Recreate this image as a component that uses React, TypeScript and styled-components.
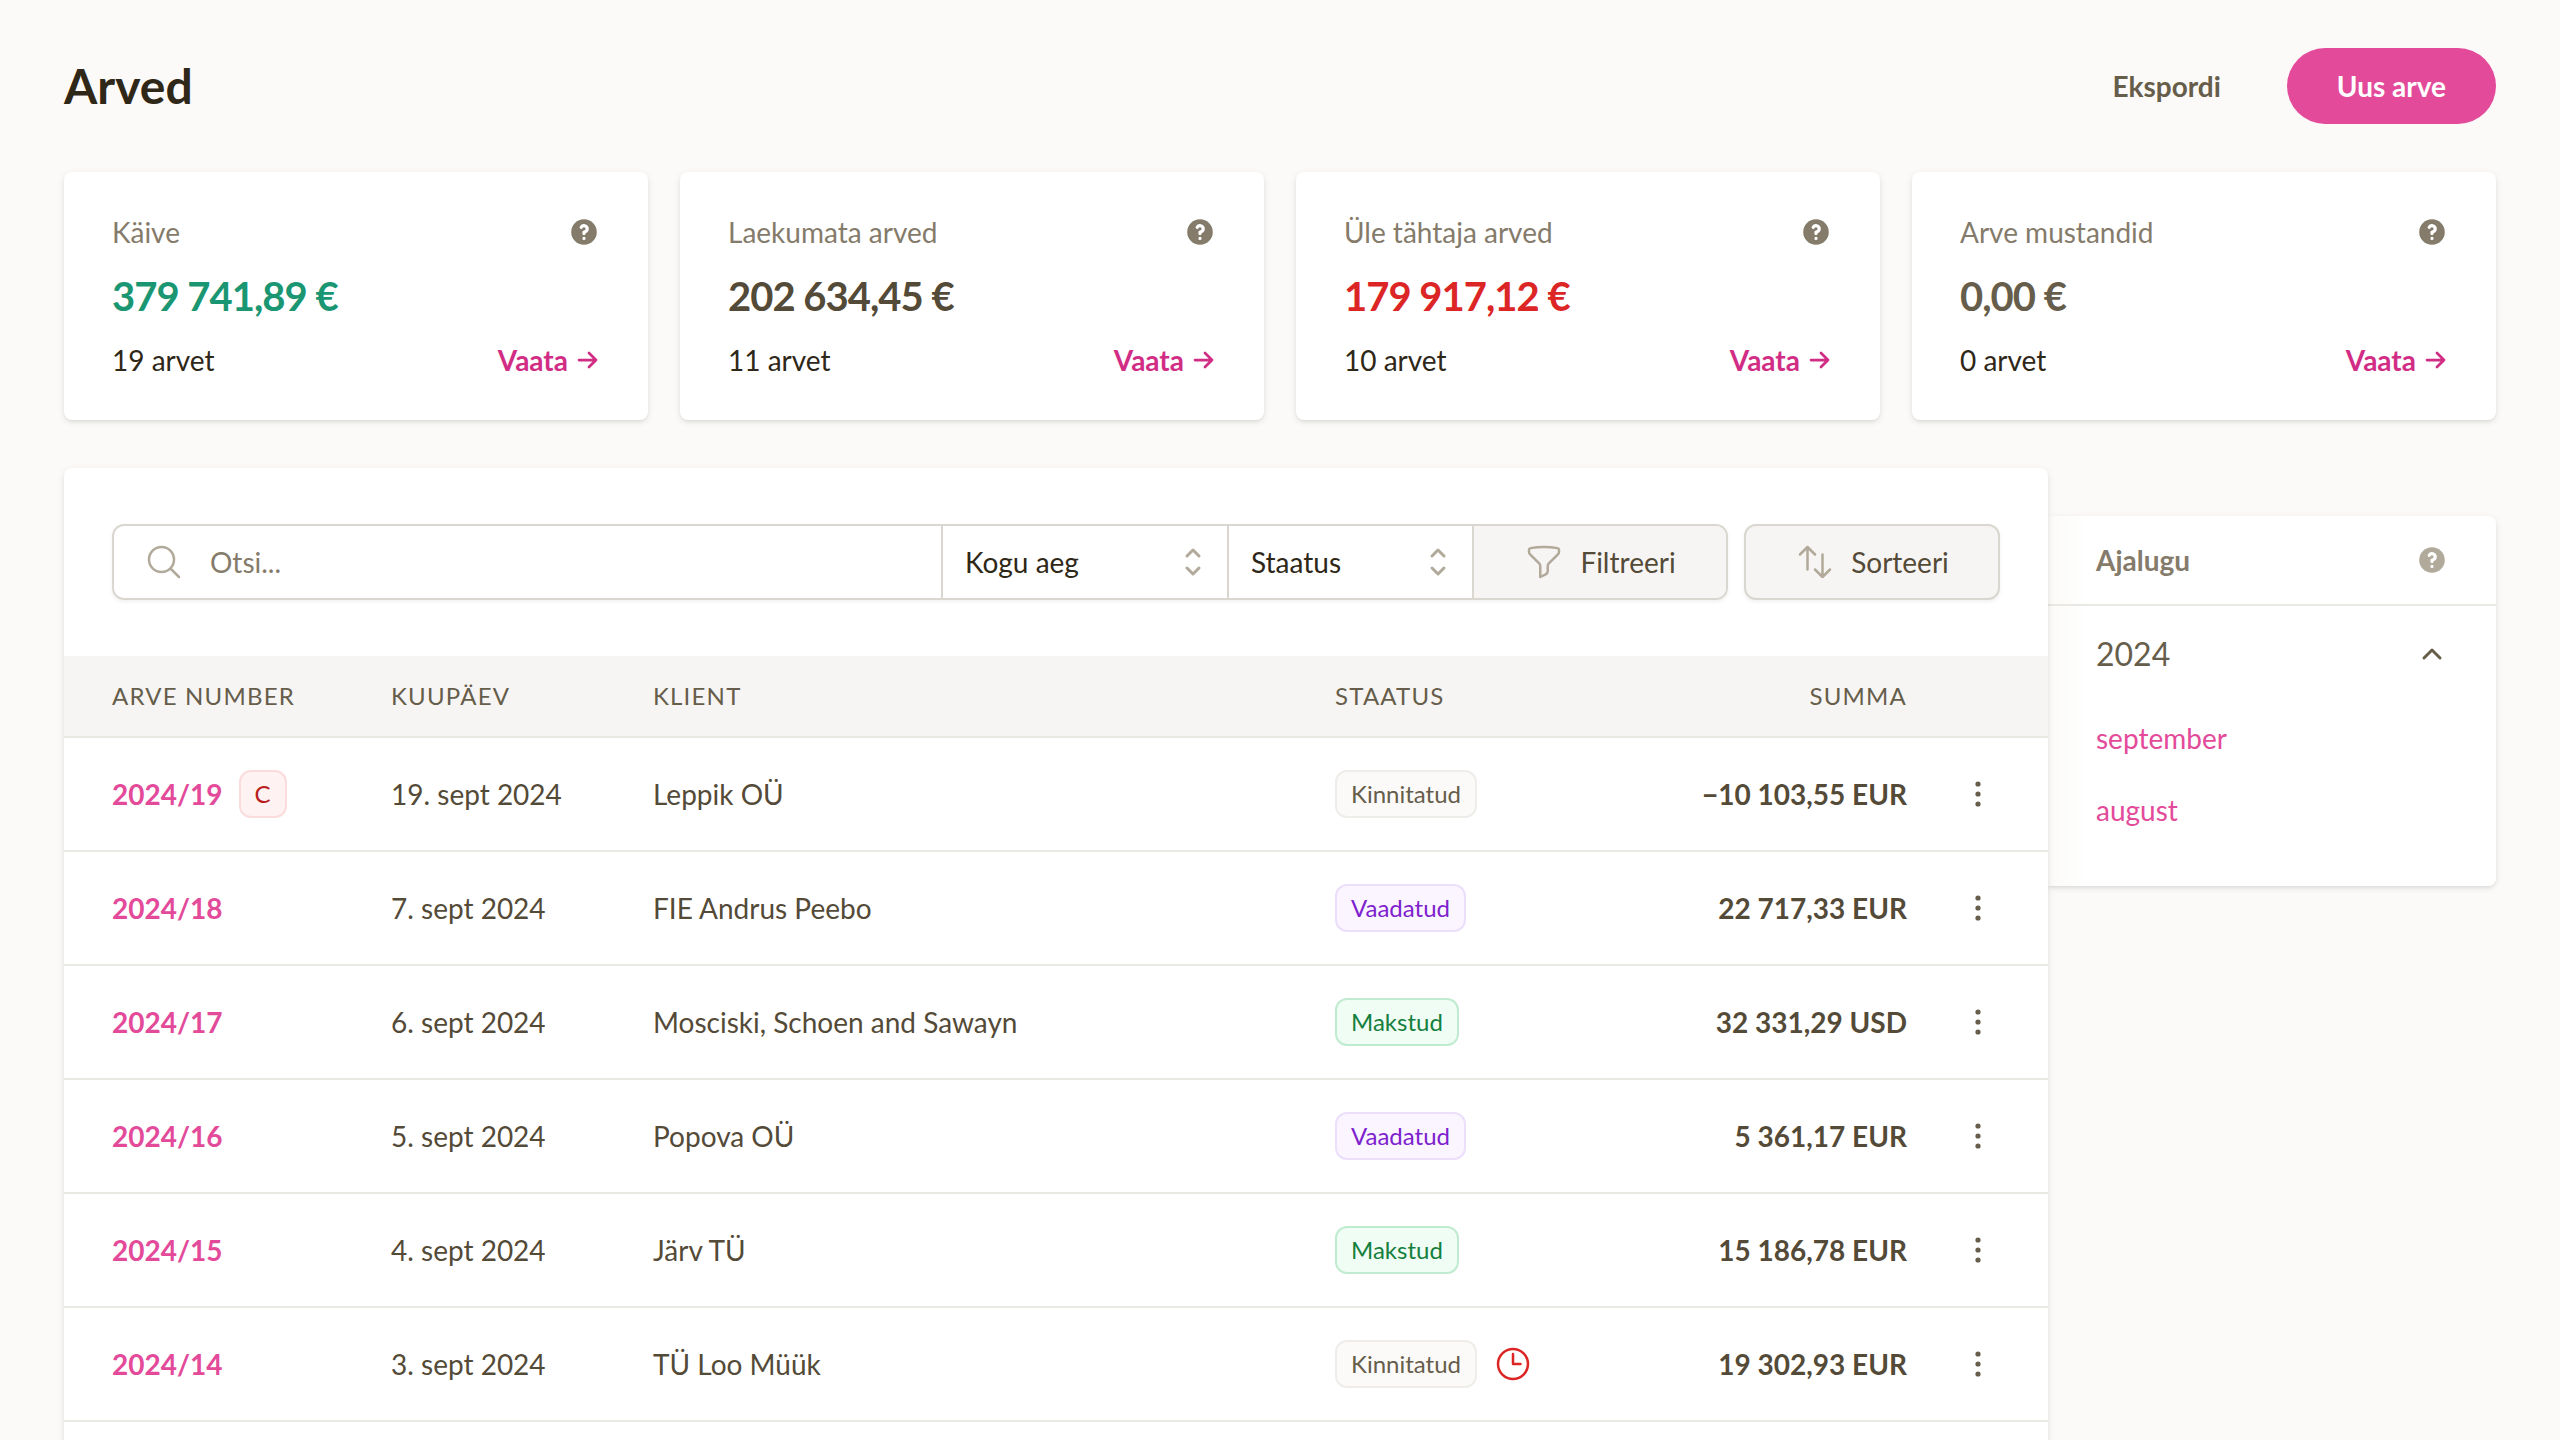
import React from "react";
import styled, { createGlobalStyle, css } from "styled-components";

const Global = createGlobalStyle`
  *, *::before, *::after { box-sizing: border-box; }
  body {
    margin: 0;
    background: #fbfaf8;
    color: #2f2717;
    font-family: Lato, "Open Sans", sans-serif;
    font-size: 28px;
    line-height: 40px;
    text-rendering: optimizeLegibility;
    -webkit-font-smoothing: antialiased;
  }
  button, input, select { font: inherit; color: inherit; margin: 0; text-rendering: inherit; }
  button { cursor: pointer; }
  a { text-decoration: none; }
`;

const Page = styled.div`
  padding: 48px 64px 0;
  height: 100vh;
  overflow: hidden;
`;

const Header = styled.header`
  display: flex;
  align-items: center;
  justify-content: space-between;
  margin-bottom: 48px;
`;

const Title = styled.h1`
  margin: 0;
  font-size: 48px;
  line-height: 64px;
  font-weight: 700;
  color: #2f2717;
`;

const Actions = styled.div`
  display: flex;
  gap: 16px;
`;

const Button = styled.button<{ $primary?: boolean }>`
  height: 76px;
  padding: 0 50px;
  border: 0;
  border-radius: 38px;
  font-weight: 700;
  background: ${(p) => (p.$primary ? "#e34a9a" : "transparent")};
  color: ${(p) => (p.$primary ? "#ffffff" : "#665d4b")};
`;

const cardShadow = css`
  box-shadow: 0 2px 6px rgba(0, 0, 0, 0.1), 0 2px 4px -2px rgba(0, 0, 0, 0.1);
`;

const Stats = styled.section`
  display: grid;
  grid-template-columns: repeat(4, 1fr);
  gap: 32px;
  margin-bottom: 48px;
`;

const StatCard = styled.article`
  display: flex;
  flex-direction: column;
  gap: 24px;
  padding: 40px 48px;
  background: #ffffff;
  border-radius: 8px;
  ${cardShadow}
`;

const StatRow = styled.div`
  display: flex;
  align-items: center;
  justify-content: space-between;
`;

const StatLabel = styled.span`
  color: #857b6b;
`;

const HelpButton = styled.button`
  display: flex;
  padding: 0;
  border: 0;
  background: none;
`;

const Amount = styled.strong<{ $color: string }>`
  font-size: 40px;
  line-height: 40px;
  font-weight: 700;
  letter-spacing: -0.025em;
  color: ${(p) => p.$color};
`;

const MoreLink = styled.a`
  display: flex;
  align-items: center;
  gap: 8px;
  font-weight: 700;
  color: #d12d85;
`;

const Main = styled.main`
  display: grid;
  grid-template-columns: minmax(0, 1fr) 448px;
  align-items: start;
`;

const Panel = styled.section`
  position: relative;
  padding-bottom: 48px;
  background: #ffffff;
  border-radius: 8px;
  ${cardShadow}
`;

const Toolbar = styled.div`
  display: flex;
  gap: 16px;
  padding: 56px 48px;
`;

const FilterGroup = styled.div`
  display: flex;
  flex: 1;
  height: 76px;
  border: 2px solid #dad7d0;
  border-radius: 12px;
  box-shadow: 0 2px 4px rgba(0, 0, 0, 0.06);
  overflow: hidden;
`;

const Search = styled.label`
  display: flex;
  align-items: center;
  flex: 1;
  gap: 26px;
  padding-left: 30px;
`;

const SearchInput = styled.input`
  flex: 1;
  min-width: 0;
  height: 72px;
  padding: 0;
  border: 0;
  outline: 0;
  background: transparent;
  &::placeholder { color: #857b6b; opacity: 1; }
`;

const SelectBox = styled.div<{ $width: number }>`
  display: grid;
  align-items: center;
  width: ${(p) => p.$width}px;
  border-left: 2px solid #dad7d0;
  & > * { grid-area: 1 / 1; }
  & > svg { justify-self: end; margin-right: 14px; pointer-events: none; }
`;

const Select = styled.select`
  width: 100%;
  height: 72px;
  padding: 0 56px 0 22px;
  border: 0;
  outline: 0;
  background: transparent;
  appearance: none;
`;

const ToolButton = styled.button<{ $attached?: boolean }>`
  display: flex;
  align-items: center;
  justify-content: center;
  gap: 16px;
  width: 256px;
  height: 76px;
  padding: 0;
  border: 2px solid #dad7d0;
  border-radius: 12px;
  background: #f7f5f3;
  color: #544a38;
  box-shadow: 0 2px 4px rgba(0, 0, 0, 0.06);
  ${(p) =>
    p.$attached &&
    css`
      width: 254px;
      height: 72px;
      border-width: 0 0 0 2px;
      border-radius: 0;
      box-shadow: none;
    `}
`;

const Table = styled.table`
  width: 100%;
  border-collapse: separate;
  border-spacing: 0;
  table-layout: fixed;
`;

const Col = styled.col<{ $width?: number }>`
  width: ${(p) => (p.$width ? `${p.$width}px` : "auto")};
`;

const Th = styled.th<{ $end?: boolean }>`
  height: 82px;
  padding: 0;
  border-bottom: 2px solid #eae8e3;
  background: #f7f5f3;
  color: #665d4b;
  font-size: 24px;
  line-height: 32px;
  font-weight: 400;
  letter-spacing: 0.05em;
  text-transform: uppercase;
  text-align: ${(p) => (p.$end ? "right" : "left")};
  &:first-child { padding-left: 48px; }
`;

const Td = styled.td<{ $end?: boolean }>`
  height: 114px;
  padding: 0;
  border-bottom: 2px solid #eae8e3;
  color: #544a38;
  font-weight: ${(p) => (p.$end ? 700 : 400)};
  text-align: ${(p) => (p.$end ? "right" : "left")};
  white-space: nowrap;
  &:first-child { padding-left: 48px; }
`;

const CellLine = styled.div`
  display: flex;
  align-items: center;
  gap: 16px;
`;

const InvoiceLink = styled.a`
  font-weight: 700;
  color: #e34a9a;
`;

const tones = {
  grey: ["#fbfaf8", "#efedea", "#665d4b"],
  purple: ["#faf5ff", "#ecdffb", "#7e22ce"],
  green: ["#f0fdf4", "#c1ebd0", "#15803d"],
  red: ["#fef2f2", "#fbdcdc", "#b91c1c"],
};
type Tone = keyof typeof tones;

const Badge = styled.span<{ $tone: Tone }>`
  padding: 6px 14px;
  border: 2px solid ${(p) => tones[p.$tone][1]};
  border-radius: 12px;
  background: ${(p) => tones[p.$tone][0]};
  color: ${(p) => tones[p.$tone][2]};
  font-size: 24px;
  line-height: 32px;
`;

const MenuButton = styled.button`
  display: flex;
  margin: 0 auto;
  padding: 0;
  border: 0;
  background: none;
  color: #665d4b;
`;

const History = styled.aside`
  margin-top: 48px;
  border-radius: 0 8px 8px 0;
  background: linear-gradient(to right, #fbfaf8, #ffffff 40px);
  ${cardShadow}
`;

const HistoryHead = styled.div`
  display: flex;
  align-items: center;
  justify-content: space-between;
  height: 90px;
  padding: 0 48px;
  border-bottom: 2px solid #eae8e3;
`;

const HistoryTitle = styled.h2`
  margin: 0;
  font-size: 28px;
  line-height: 40px;
  font-weight: 700;
  color: #857b6b;
`;

const HistoryBody = styled.div`
  padding: 24px 48px 40px;
`;

const YearButton = styled.button`
  display: flex;
  align-items: center;
  justify-content: space-between;
  width: 100%;
  padding: 0;
  border: 0;
  background: none;
  color: #665d4b;
  font-size: 32px;
  line-height: 48px;
`;

const Months = styled.ul`
  display: grid;
  margin: 0;
  padding: 24px 0 0;
  list-style: none;
`;

const MonthLink = styled.a`
  display: block;
  padding: 16px 0;
  color: #e34a9a;
`;

const HelpIcon = ({ color = "#857b6b" }: { color?: string }) => (
  <svg width="32" height="32" viewBox="0 0 20 20" fill={color} aria-hidden="true">
    <path
      fillRule="evenodd"
      clipRule="evenodd"
      d="M18 10a8 8 0 11-16 0 8 8 0 0116 0zm-8-3a1 1 0 00-.867.5 1 1 0 11-1.731-1A3 3 0 0113 8a3.001 3.001 0 01-2 2.83V11a1 1 0 11-2 0v-1a1 1 0 011-1 1 1 0 100-2zm0 8a1 1 0 100-2 1 1 0 000 2z"
    />
  </svg>
);

type LineIconProps = { d: string; size: number; box?: number; width?: number; color?: string };

const LineIcon = ({ d, size, box = 24, width = 1.5, color = "#b1a999" }: LineIconProps) => (
  <svg width={size} height={size} viewBox={`0 0 ${box} ${box}`} fill="none" stroke={color} strokeWidth={width} strokeLinecap="round" strokeLinejoin="round" aria-hidden="true">
    <path d={d} />
  </svg>
);

const SEARCH = "M21 21l-5.197-5.197m0 0A7.5 7.5 0 105.196 5.196a7.5 7.5 0 0010.607 10.607z";
const UP_DOWN = "M7 7l3-3 3 3m0 6l-3 3-3-3";
const FUNNEL = "M12 3c2.755 0 5.455.232 8.083.678.533.09.917.556.917 1.096v1.044a2.25 2.25 0 01-.659 1.591l-5.432 5.432a2.25 2.25 0 00-.659 1.591v2.927a2.25 2.25 0 01-1.244 2.013L9.75 21v-6.568a2.25 2.25 0 00-.659-1.591L3.659 7.409A2.25 2.25 0 013 5.818V4.774c0-.54.384-1.006.917-1.096A48.32 48.32 0 0112 3z";
const SORT = "M3 7.5L7.5 3m0 0L12 7.5M7.5 3v13.5m13.5 0L16.5 21m0 0L12 16.5m4.5 4.5V7.5";
const CLOCK = "M12 6v6h4.5m4.5 0a9 9 0 11-18 0 9 9 0 0118 0z";
const ARROW = "M3 12h17m-7-7l7 7-7 7";
const CHEVRON_UP = "M6 15l6-6 6 6";

const stats = [
  { label: "Käive", amount: "379 741,89 €", color: "#1a9672", count: "19 arvet" },
  { label: "Laekumata arved", amount: "202 634,45 €", color: "#544a38", count: "11 arvet" },
  { label: "Üle tähtaja arved", amount: "179 917,12 €", color: "#dc2626", count: "10 arvet" },
  { label: "Arve mustandid", amount: "0,00 €", color: "#665d4b", count: "0 arvet" },
];

type Invoice = { no: string; credit?: boolean; date: string; client: string; status: string; tone: Tone; late?: boolean; sum: string };

const invoices: Invoice[] = [
  { no: "2024/19", credit: true, date: "19. sept 2024", client: "Leppik OÜ", status: "Kinnitatud", tone: "grey", sum: "−10 103,55 EUR" },
  { no: "2024/18", date: "7. sept 2024", client: "FIE Andrus Peebo", status: "Vaadatud", tone: "purple", sum: "22 717,33 EUR" },
  { no: "2024/17", date: "6. sept 2024", client: "Mosciski, Schoen and Sawayn", status: "Makstud", tone: "green", sum: "32 331,29 USD" },
  { no: "2024/16", date: "5. sept 2024", client: "Popova OÜ", status: "Vaadatud", tone: "purple", sum: "5 361,17 EUR" },
  { no: "2024/15", date: "4. sept 2024", client: "Järv TÜ", status: "Makstud", tone: "green", sum: "15 186,78 EUR" },
  { no: "2024/14", date: "3. sept 2024", client: "TÜ Loo Müük", status: "Kinnitatud", tone: "grey", late: true, sum: "19 302,93 EUR" },
];

export default function App() {
  return (
    <Page>
      <Global />
      <Header>
        <Title>Arved</Title>
        <Actions>
          <Button type="button">Ekspordi</Button>
          <Button type="button" $primary>Uus arve</Button>
        </Actions>
      </Header>

      <Stats>
        {stats.map((s) => (
          <StatCard key={s.label}>
            <StatRow>
              <StatLabel>{s.label}</StatLabel>
              <HelpButton type="button" aria-label={`Abi: ${s.label}`}><HelpIcon /></HelpButton>
            </StatRow>
            <Amount $color={s.color}>{s.amount}</Amount>
            <StatRow>
              <span>{s.count}</span>
              <MoreLink href="#">
                Vaata
                <LineIcon d={ARROW} size={24} width={2.75} color="#d12d85" />
              </MoreLink>
            </StatRow>
          </StatCard>
        ))}
      </Stats>

      <Main>
        <Panel>
          <Toolbar>
            <FilterGroup>
              <Search>
                <LineIcon d={SEARCH} size={40} />
                <SearchInput type="text" placeholder="Otsi..." aria-label="Otsi" />
              </Search>
              <SelectBox $width={286}>
                <Select aria-label="Periood"><option>Kogu aeg</option></Select>
                <LineIcon d={UP_DOWN} size={40} box={20} />
              </SelectBox>
              <SelectBox $width={245}>
                <Select aria-label="Staatus"><option>Staatus</option></Select>
                <LineIcon d={UP_DOWN} size={40} box={20} />
              </SelectBox>
              <ToolButton type="button" $attached>
                <LineIcon d={FUNNEL} size={40} />
                Filtreeri
              </ToolButton>
            </FilterGroup>
            <ToolButton type="button">
              <LineIcon d={SORT} size={40} />
              Sorteeri
            </ToolButton>
          </Toolbar>

          <Table>
            <colgroup>
              <Col $width={327} />
              <Col $width={262} />
              <Col />
              <Col $width={278} />
              <Col $width={294} />
              <Col $width={141} />
            </colgroup>
            <thead>
              <tr>
                <Th>Arve number</Th>
                <Th>Kuupäev</Th>
                <Th>Klient</Th>
                <Th>Staatus</Th>
                <Th $end>Summa</Th>
                <Th aria-label="Tegevused" />
              </tr>
            </thead>
            <tbody>
              {invoices.map((r) => (
                <tr key={r.no}>
                  <Td>
                    <CellLine>
                      <InvoiceLink href="#">{r.no}</InvoiceLink>
                      {r.credit && <Badge $tone="red">C</Badge>}
                    </CellLine>
                  </Td>
                  <Td>{r.date}</Td>
                  <Td>{r.client}</Td>
                  <Td>
                    <CellLine>
                      <Badge $tone={r.tone}>{r.status}</Badge>
                      {r.late && <LineIcon d={CLOCK} size={40} color="#dc2626" />}
                    </CellLine>
                  </Td>
                  <Td $end>{r.sum}</Td>
                  <Td>
                    <MenuButton type="button" aria-label={`Arve ${r.no} tegevused`}>
                      <svg width="40" height="40" viewBox="0 0 20 20" fill="currentColor" aria-hidden="true">
                        <circle cx="10" cy="5" r="1.3" />
                        <circle cx="10" cy="10" r="1.3" />
                        <circle cx="10" cy="15" r="1.3" />
                      </svg>
                    </MenuButton>
                  </Td>
                </tr>
              ))}
            </tbody>
          </Table>
        </Panel>

        <History>
          <HistoryHead>
            <HistoryTitle>Ajalugu</HistoryTitle>
            <HelpButton type="button" aria-label="Abi: Ajalugu"><HelpIcon color="#b1a999" /></HelpButton>
          </HistoryHead>
          <HistoryBody>
            <YearButton type="button" aria-expanded="true">
              2024
              <LineIcon d={CHEVRON_UP} size={32} width={2.25} color="#665d4b" />
            </YearButton>
            <Months>
              <li><MonthLink href="#">september</MonthLink></li>
              <li><MonthLink href="#">august</MonthLink></li>
            </Months>
          </HistoryBody>
        </History>
      </Main>
    </Page>
  );
}
